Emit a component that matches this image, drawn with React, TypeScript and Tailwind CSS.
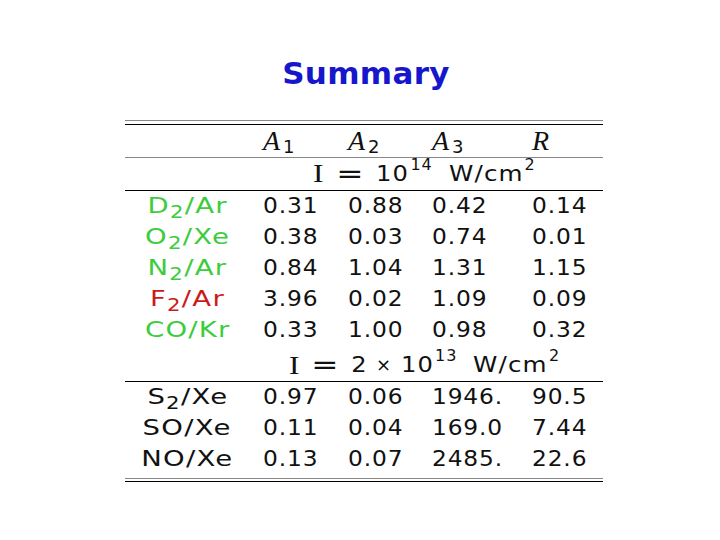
import React from "react";

const sans = { fontFamily: '"DejaVu Sans", Verdana, sans-serif' };

function Sub({ children }: { children: React.ReactNode }) {
  return <span className="text-[17px] relative top-[5px] leading-none">{children}</span>;
}
function Sup({ children }: { children: React.ReactNode }) {
  return <span className="text-[16px] relative top-[-9px] leading-none tracking-[1px]">{children}</span>;
}

function Num({ v }: { v: string }) {
  return (
    <div className="pl-2 flex items-center">
      <span className="scale-x-[1.06] origin-left tracking-[0.8px]">{v}</span>
    </div>
  );
}

type Row = { label: React.ReactNode; color: string; vals: string[] };

function DataRow({ r }: { r: Row }) {
  return (
    <div className="grid grid-cols-[130px_85px_84px_100px_79px] h-[31px] items-center leading-none pb-[1px]">
      <div className={`flex justify-center ${r.color}`}>
        <div className="scale-x-[1.25] tracking-[1px] text-[22px] pr-[4px]">{r.label}</div>
      </div>
      {r.vals.map((v, i) => (
        <Num key={i} v={v} />
      ))}
    </div>
  );
}

function lab(a: string, sub: string | null, b: string) {
  return (
    <span>
      {a}
      {sub && <Sub>{sub}</Sub>}
      {b}
    </span>
  );
}

const green = "text-[#3ccc3c]";
const red = "text-[#cc1a1a]";
const black = "text-[#111]";

const rows1: Row[] = [
  { label: lab("D", "2", "/Ar"), color: green, vals: ["0.31", "0.88", "0.42", "0.14"] },
  { label: lab("O", "2", "/Xe"), color: green, vals: ["0.38", "0.03", "0.74", "0.01"] },
  { label: lab("N", "2", "/Ar"), color: green, vals: ["0.84", "1.04", "1.31", "1.15"] },
  { label: lab("F", "2", "/Ar"), color: red, vals: ["3.96", "0.02", "1.09", "0.09"] },
  { label: lab("CO/Kr", null, ""), color: green, vals: ["0.33", "1.00", "0.98", "0.32"] },
];
const rows2: Row[] = [
  { label: lab("S", "2", "/Xe"), color: black, vals: ["0.97", "0.06", "1946.", "90.5"] },
  { label: lab("SO/Xe", null, ""), color: black, vals: ["0.11", "0.04", "169.0", "7.44"] },
  { label: lab("NO/Xe", null, ""), color: black, vals: ["0.13", "0.07", "2485.", "22.6"] },
];

function HeadCell({ l, s }: { l: string; s?: string }) {
  return (
    <div className="pl-2 flex items-center">
      <span className="italic text-[28px] leading-none" style={{ fontFamily: '"Liberation Serif", serif' }}>
        {l}
      </span>
      {s && <span className="text-[18px] relative top-[6px] leading-none ml-[3px]">{s}</span>}
    </div>
  );
}

function Intensity({ two }: { two?: boolean }) {
  return (
    <div className="flex justify-center items-center pr-[8px] leading-none">
      <span style={{ fontFamily: '"Liberation Serif", serif' }} className="text-[25px] scale-x-125">I</span>
      <span className="mx-[16px] text-[26px] scale-x-125">=</span>
      {two && (
        <>
          <span className="scale-x-110">2</span>
          <span className="mx-[10px] text-[18px]">×</span>
        </>
      )}
      <span className="scale-x-110 origin-left tracking-[1px] mr-[4px]">10</span>
      <Sup>{two ? "13" : "14"}</Sup>
      <span className="ml-[16px] scale-x-[1.12] origin-left tracking-[1px] mr-[9px]">W/cm</span>
      <Sup>2</Sup>
    </div>
  );
}

export default function App() {
  return (
    <div className="w-[720px] h-[540px] bg-white relative" style={sans}>
      <div className="pt-[51px] flex justify-center pl-[12px]">
        <h1 className="text-[31px] font-bold text-[#1616cc] leading-[44px] tracking-[0.3px]">Summary</h1>
      </div>
      <div className="ml-[125px] mt-[25px] w-[478px] text-[22px] text-[#111]">
        <div className="h-px bg-[#888]" />
        <div className="h-[3px]" />
        <div className="h-[1px] bg-black" />
        <div className="grid grid-cols-[130px_85px_84px_100px_79px] h-[32px] items-center">
          <div />
          <HeadCell l="A" s="1" />
          <HeadCell l="A" s="2" />
          <HeadCell l="A" s="3" />
          <HeadCell l="R" />
        </div>
        <div className="h-px bg-[#888]" />
        <div className="grid grid-cols-[130px_348px] h-[32px] items-center pb-[1px]">
          <div />
          <Intensity />
        </div>
        <div className="h-px bg-black" />
        {rows1.map((r, i) => (
          <DataRow key={i} r={r} />
        ))}
        <div className="grid grid-cols-[130px_348px] h-[35px] items-center">
          <div />
          <div className="pt-[3px]">
            <Intensity two />
          </div>
        </div>
        <div className="h-px bg-black" />
        {rows2.map((r, i) => (
          <DataRow key={i} r={r} />
        ))}
        <div className="h-[3px]" />
        <div className="h-px bg-[#888]" />
        <div className="h-[2px]" />
        <div className="h-px bg-black" />
      </div>
    </div>
  );
}
